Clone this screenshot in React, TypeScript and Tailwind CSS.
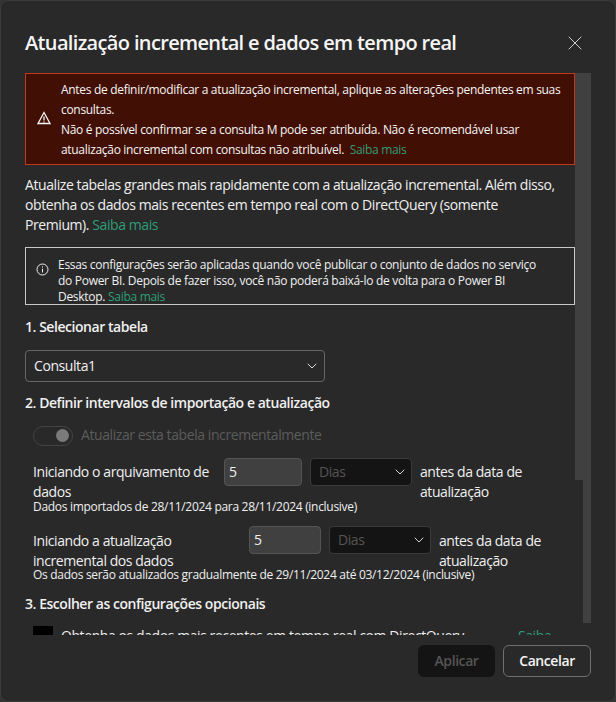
import { ChevronDown, X } from "lucide-react";

const font = { fontFamily: '"Open Sans", sans-serif' };

function Link({ children }: { children: string }) {
  return <span className="text-[#2f9e78]">{children}</span>;
}

function Heading({ children }: { children: string }) {
  return <h2 className="text-sm font-semibold leading-5 tracking-[-0.45px] text-[#f0f0f0]">{children}</h2>;
}

function DarkSelect({ width }: { width: string }) {
  return (
    <div className={`${width} flex h-7 shrink-0 items-center justify-between rounded-sm border border-[#3a3a3a] bg-[#141414] pl-2 pr-[3px] text-sm text-[#555]`}>
      <span>Dias</span>
      <ChevronDown size={16} strokeWidth={1.5} className="text-[#d8d8d8]" />
    </div>
  );
}

export default function App() {
  return (
    <div className="h-[702px] w-[616px] overflow-hidden bg-[#333] tracking-[-0.42px]" style={font}>
      <div className="flex h-full flex-col rounded-lg border border-[#3c3c3c] bg-[#292929] text-white">
        <header className="flex h-[72px] shrink-0 items-center justify-between pl-6 pr-[28px] pt-[12px]">
          <h1 className="text-xl font-semibold leading-7 tracking-[-0.65px] text-[#f5f5f5]">Atualização incremental e dados em tempo real</h1>
          <X size={24} strokeWidth={1} className="text-[#d0d0d0]" />
        </header>

        <div className="relative h-[562px] shrink-0 overflow-hidden pl-6 pr-10">
          <div className="absolute right-6 top-0 h-[550px] w-2 bg-[#404040]" />
          <div className="absolute right-8 top-0 h-[407px] w-2 bg-[#404040]" />

          <div className="flex h-[92px] items-center border border-[#c0391b] bg-[#420f04] text-xs leading-5 tracking-[-0.31px] text-[#f5f5f5]">
            <div className="flex w-[35px] shrink-0 justify-end pr-[10px]">
              <svg className="-mt-[2px]" width="14" height="14" viewBox="0 0 14 14" fill="none" stroke="#f5f5f5" strokeWidth="1.3">
                <path d="M7 1.5 13 12.5H1Z" />
                <path d="M7 5.5V9.5M7 10.5V11.5" />
              </svg>
            </div>
            <p className="pt-[2px]">
              Antes de definir/modificar a atualização incremental, aplique as alterações pendentes em suas consultas.
              <br />
              Não é possível confirmar se a consulta M pode ser atribuída. Não é recomendável usar atualização incremental com consultas não atribuível.&nbsp;&nbsp;<Link>Saiba mais</Link>
            </p>
          </div>

          <p className="mt-[10px] w-[538px] text-sm leading-5 text-[#f0f0f0]">
            Atualize tabelas grandes mais rapidamente com a atualização incremental. Além disso, obtenha os dados mais recentes em tempo real com o DirectQuery (somente Premium). <Link>Saiba mais</Link>
          </p>

          <div className="mt-[12px] flex h-[58px] overflow-hidden border border-[#c8c8c8] pl-[10px] pr-6 pt-[9px] text-xs leading-4 tracking-[-0.29px] text-[#f0f0f0]">
            <svg className="mr-[9px] mt-[6px] shrink-0" width="13" height="13" viewBox="0 0 13 13" fill="none" stroke="#f0f0f0">
              <circle cx="6.5" cy="6.5" r="5.5" />
              <path d="M6.5 5.8V9.5M6.5 3.3V4.5" />
            </svg>
            <p>
              Essas configurações serão aplicadas quando você publicar o conjunto de dados no serviço do Power BI. Depois de fazer isso, você não poderá baixá-lo de volta para o Power BI Desktop. <Link>Saiba mais</Link>
            </p>
          </div>

          <div className="mt-[12px]">
            <Heading>1. Selecionar tabela</Heading>
          </div>
          <div className="mt-[13px] flex h-8 w-[300px] items-center justify-between rounded-sm border border-[#666] pl-2 pr-1 text-sm text-[#f0f0f0]">
            <span className="pb-px">Consulta1</span>
            <ChevronDown size={16} strokeWidth={1.5} className="text-[#d8d8d8]" />
          </div>

          <div className="mt-[11px]">
            <Heading>2. Definir intervalos de importação e atualização</Heading>
          </div>

          <div className="ml-2 mt-[12px] flex items-center gap-2">
            <div className="flex h-5 w-10 items-center justify-end rounded-full border border-[#444] pr-[3px]">
              <div className="h-[13px] w-[13px] rounded-full bg-[#7a7a7a]" />
            </div>
            <span className="pb-px text-sm leading-5 text-[#5c5c5c]">Atualizar esta tabela incrementalmente</span>
          </div>

          <div className="ml-2 mt-[12px] flex text-sm leading-5 text-[#f0f0f0]">
            <div className="mt-[4px] w-[191px] shrink-0">Iniciando o arquivamento de dados</div>
            <div className="flex h-7 w-[78px] shrink-0 items-center rounded-sm border border-[#555] bg-[#404040] pl-[4px]">5</div>
            <div className="ml-2"><DarkSelect width="w-[102px]" /></div>
            <div className="ml-2 mt-[4px] w-[140px]">antes da data de atualização</div>
          </div>
          <p className="ml-2 -mt-[3px] text-xs leading-4 text-[#f0f0f0] tracking-[-0.3px]">Dados importados de 28/11/2024 para 28/11/2024 (inclusive)</p>

          <div className="ml-2 mt-[11px] flex text-sm leading-5 text-[#f0f0f0]">
            <div className="mt-[5px] w-[216px] shrink-0">Iniciando a atualização<br />incremental dos dados</div>
            <div className="flex h-7 w-[72px] shrink-0 items-center rounded-sm border border-[#555] bg-[#404040] pl-1">5</div>
            <div className="ml-2"><DarkSelect width="w-[102px]" /></div>
            <div className="ml-2 mt-[5px] w-[120px]">antes da data de atualização</div>
          </div>
          <p className="ml-2 -mt-[4px] text-xs leading-4 text-[#f0f0f0] tracking-[-0.3px]">Os dados serão atualizados gradualmente de 29/11/2024 até 03/12/2024 (inclusive)</p>

          <div className="mt-[11px]">
            <Heading>3. Escolher as configurações opcionais</Heading>
          </div>

          <div className="ml-2 mt-[12px] flex text-sm leading-5 text-[#f0f0f0]">
            <div className="h-5 w-5 shrink-0 bg-black" />
            <span className="ml-2 w-[457px] shrink-0">Obtenha os dados mais recentes em tempo real com DirectQuery</span>
            <Link>Saiba</Link>
          </div>
        </div>

        <footer className="flex justify-end gap-2 pr-6 pt-[10px]">
          <button className="h-8 w-[77px] rounded-md bg-[#141414] text-sm font-semibold text-[#555]">Aplicar</button>
          <button className="h-8 w-[88px] rounded-md border border-[#707070] text-sm font-semibold text-[#f5f5f5]">Cancelar</button>
        </footer>
      </div>
    </div>
  );
}
